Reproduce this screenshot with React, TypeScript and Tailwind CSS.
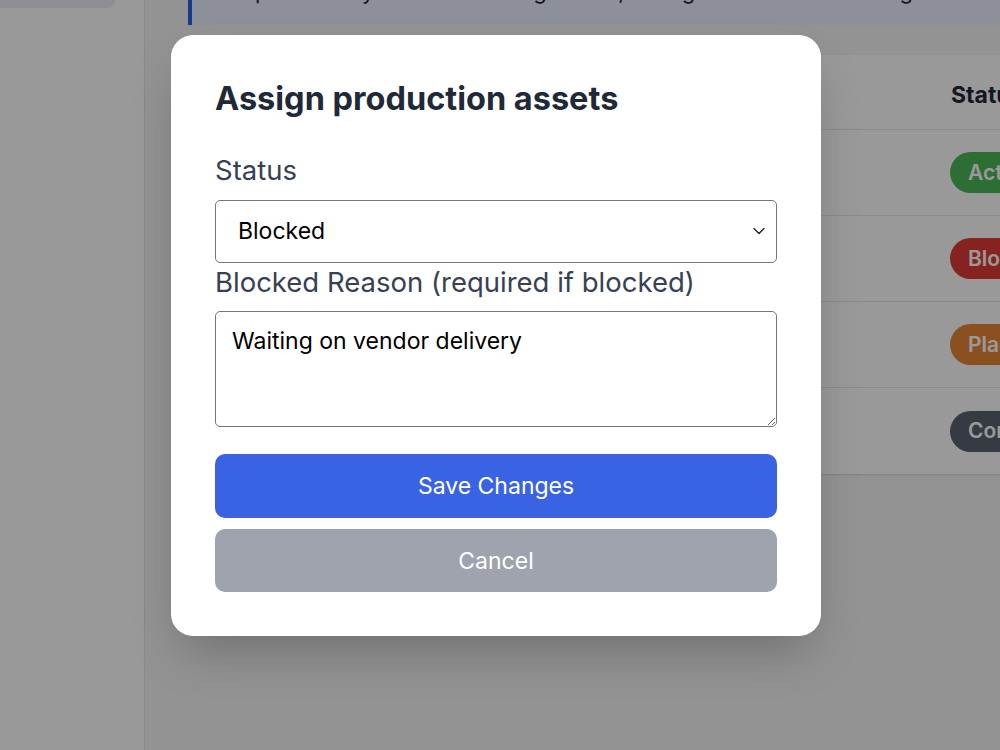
import { ChevronDown } from "lucide-react";

const rows = [
  { asset: "Camera kit A", owner: "Dana", status: "Active", color: "bg-[#4cb757]" },
  { asset: "Lighting rig", owner: "Marco", status: "Blocked", color: "bg-[#df3b36]" },
  { asset: "Sound cart", owner: "Priya", status: "Planned", color: "bg-[#e68636]" },
  { asset: "Grip truck", owner: "Lee", status: "Complete", color: "bg-[#5a6171]" },
];

function Sidebar() {
  return (
    <aside className="w-[145px] shrink-0 border-r border-[#e5e6e8] bg-white">
      <div className="-mt-[30px] h-[38px] w-[115px] rounded-r-lg rounded-bl-none bg-[#eceff6]" />
    </aside>
  );
}

function AssetTable() {
  return (
    <div className="mt-[30px] w-[900px] overflow-hidden rounded-lg bg-white shadow-sm">
      <div className="flex h-[75px] items-center border-b border-[#e5e7eb] text-[23px] font-bold text-[#1f2937]">
        <div className="w-[220px] pl-6">Asset</div>
        <div className="w-[200px]">Owner</div>
        <div className="w-[343px]">Due</div>
        <div className="pt-[6px]">Status</div>
      </div>
      {rows.map((r, i) => (
        <div
          key={r.asset}
          className={`flex h-[86px] items-center text-[20px] text-[#374151] ${i < rows.length - 1 ? "border-b border-[#e5e7eb]" : ""}`}
        >
          <div className="w-[220px] pl-6">{r.asset}</div>
          <div className="w-[200px]">{r.owner}</div>
          <div className="w-[342px]">Jun 1{i}</div>
          <div>
            <span className={`inline-flex h-[41px] items-center rounded-full px-[18px] text-[21px] font-semibold text-white ${r.color}`}>
              {r.status}
            </span>
          </div>
        </div>
      ))}
    </div>
  );
}

function Modal() {
  return (
    <div className="absolute inset-0 bg-black/40">
      <div className="absolute left-[171px] top-[35px] w-[650px] rounded-[22px] bg-white px-[44px] pb-[44px] pt-[44px] shadow-2xl">
        <h2 className="text-[32.5px] font-bold leading-[40px] text-[#1f2937]">Assign production assets</h2>
        <label className="mt-[33px] block text-[27.5px] leading-[36px] text-[#374151]">Status</label>
        <div className="relative mt-[12px]">
          <select
            defaultValue="Blocked"
            className="h-[63px] w-full appearance-none rounded-[5px] border border-[#767676] bg-white pl-[22px] text-[23px] text-black outline-none"
          >
            <option>Active</option>
            <option>Blocked</option>
            <option>Planned</option>
            <option>Complete</option>
          </select>
          <ChevronDown className="pointer-events-none absolute right-[8px] top-[21px] h-[20px] w-[20px] text-[#222]" strokeWidth={1.6} />
        </div>
        <label className="mt-[1px] block text-[27.5px] leading-[36px] text-[#374151]">
          Blocked Reason (required if blocked)
        </label>
        <textarea
          defaultValue="Waiting on vendor delivery"
          className="mt-[11px] block h-[116px] w-full rounded-[5px] border border-[#767676] px-[16px] py-[14px] text-[23px] leading-[30px] text-black outline-none"
        />
        <button className="mt-[27px] flex h-[64px] w-full items-center justify-center rounded-[10px] bg-[#3a63e4] text-[23px] text-white">
          Save Changes
        </button>
        <button className="mt-[11px] flex h-[63px] w-full items-center justify-center rounded-[10px] bg-[#9fa3ad] pt-[2px] text-[23px] text-white">
          Cancel
        </button>
      </div>
    </div>
  );
}

export default function App() {
  return (
    <div className="relative flex h-[750px] w-[1000px] overflow-hidden bg-[#f5f5f5] font-['Inter',sans-serif]">
      <Sidebar />
      <main className="flex-1 pl-[43px]">
        <div className="-mt-[30px] flex h-[55px] items-end border-l-4 border-[#2563eb] bg-[#ebf0ff] pb-[17px] pl-[26px] text-[22px] whitespace-nowrap text-[#1f2937]">
          Drop items anywhere to reassign them, changes are saved on drag and drop
        </div>
        <AssetTable />
      </main>
      <Modal />
    </div>
  );
}
